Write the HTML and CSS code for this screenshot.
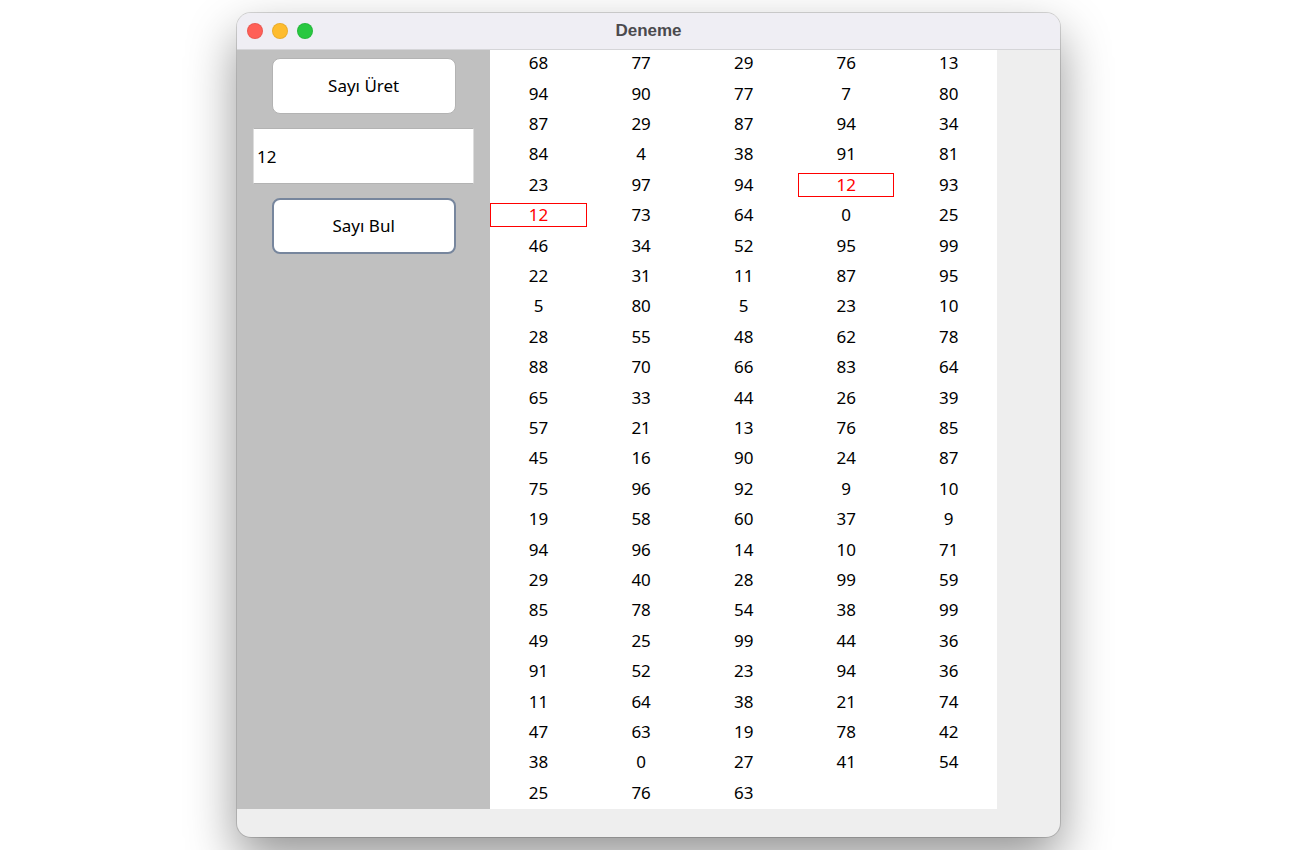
FILE: index.html
```html
<!DOCTYPE html>
<html lang="tr">
<head>
<meta charset="utf-8">
<title>Deneme</title>
<link rel="stylesheet" href="styles.css">
</head>
<body>
<main class="window">
  <header class="titlebar">
    <div class="lights">
      <button class="light close" type="button" aria-label="Kapat"></button>
      <button class="light minimize" type="button" aria-label="Küçült"></button>
      <button class="light maximize" type="button" aria-label="Büyüt"></button>
    </div>
    <h1 class="title">Deneme</h1>
  </header>
  <div class="content">
    <aside class="sidebar">
      <button class="button" type="button">Sayı Üret</button>
      <input class="field" type="text" value="12" aria-label="Aranan sayı">
      <button class="button focused" type="button">Sayı Bul</button>
    </aside>
    <table class="numbers">
      <tbody class="rows">
        <tr><td>68</td><td>77</td><td>29</td><td>76</td><td>13</td></tr>
        <tr><td>94</td><td>90</td><td>77</td><td>7</td><td>80</td></tr>
        <tr><td>87</td><td>29</td><td>87</td><td>94</td><td>34</td></tr>
        <tr><td>84</td><td>4</td><td>38</td><td>91</td><td>81</td></tr>
        <tr><td>23</td><td>97</td><td>94</td><td class="found">12</td><td>93</td></tr>
        <tr><td class="found">12</td><td>73</td><td>64</td><td>0</td><td>25</td></tr>
        <tr><td>46</td><td>34</td><td>52</td><td>95</td><td>99</td></tr>
        <tr><td>22</td><td>31</td><td>11</td><td>87</td><td>95</td></tr>
        <tr><td>5</td><td>80</td><td>5</td><td>23</td><td>10</td></tr>
        <tr><td>28</td><td>55</td><td>48</td><td>62</td><td>78</td></tr>
        <tr><td>88</td><td>70</td><td>66</td><td>83</td><td>64</td></tr>
        <tr><td>65</td><td>33</td><td>44</td><td>26</td><td>39</td></tr>
        <tr><td>57</td><td>21</td><td>13</td><td>76</td><td>85</td></tr>
        <tr><td>45</td><td>16</td><td>90</td><td>24</td><td>87</td></tr>
        <tr><td>75</td><td>96</td><td>92</td><td>9</td><td>10</td></tr>
        <tr><td>19</td><td>58</td><td>60</td><td>37</td><td>9</td></tr>
        <tr><td>94</td><td>96</td><td>14</td><td>10</td><td>71</td></tr>
        <tr><td>29</td><td>40</td><td>28</td><td>99</td><td>59</td></tr>
        <tr><td>85</td><td>78</td><td>54</td><td>38</td><td>99</td></tr>
        <tr><td>49</td><td>25</td><td>99</td><td>44</td><td>36</td></tr>
        <tr><td>91</td><td>52</td><td>23</td><td>94</td><td>36</td></tr>
        <tr><td>11</td><td>64</td><td>38</td><td>21</td><td>74</td></tr>
        <tr><td>47</td><td>63</td><td>19</td><td>78</td><td>42</td></tr>
        <tr><td>38</td><td>0</td><td>27</td><td>41</td><td>54</td></tr>
        <tr><td>25</td><td>76</td><td>63</td></tr>
      </tbody>
    </table>
  </div>
</main>
</body>
</html>
```
FILE: styles.css
```css
* {
  box-sizing: border-box;
}

html {
  overflow: hidden auto;
  scrollbar-width: none;
}

body {
  display: flex;
  justify-content: center;
  min-height: 100vh;
  margin: 0;
  padding: 13px 3px 13px 0;
  background: #fff;
  color: #000;
  font: 17px/22px "Noto Sans", sans-serif;
}

.window {
  display: flex;
  flex-direction: column;
  width: 100%;
  max-width: 823px;
  overflow: hidden;
  border-radius: 14px;
  background: #eee;
  box-shadow: 0 0 0 1px rgba(0, 0, 0, 0.15), 0 22px 50px rgba(0, 0, 0, 0.42);
}

.titlebar {
  display: grid;
  grid-template-columns: 1fr auto 1fr;
  align-items: center;
  height: 37px;
  padding: 0 10px;
  border-bottom: 1px solid #d5d5d8;
  background: #efeef4;
}

.lights {
  display: flex;
  gap: 9px;
}

.light {
  width: 16px;
  height: 16px;
  padding: 0;
  border: 1px solid rgba(0, 0, 0, 0.08);
  border-radius: 50%;
}

.close {
  background: #ff5f57;
}

.minimize {
  background: #febc2e;
}

.maximize {
  background: #28c840;
}

.title {
  margin: 0;
  color: #4b4a4e;
  font: bold 17px/22px "Liberation Sans", sans-serif;
}

.content {
  display: grid;
  flex: 1;
  grid-template-columns: 1fr 2fr;
  padding: 0 63px 28px 0;
}

.sidebar {
  display: flex;
  flex-direction: column;
  align-items: center;
  gap: 14px;
  padding: 8px 16px;
  background: #c0c0c0;
}

.button,
.field {
  height: 56px;
  background: #fff;
  color: inherit;
  font: inherit;
}

.button {
  width: 184px;
  max-width: 100%;
  border: 1px solid #b3b3b3;
  border-radius: 8px;
}

.focused {
  border: 2px solid #77869d;
}

.field {
  width: 100%;
  padding: 0 3px;
  border: 1px solid #b3b3b3;
  border-color: #b3b3b3 #ddd;
  outline: none;
}

.numbers {
  display: grid;
  background: #fff;
}

.rows {
  display: grid;
  grid-template-columns: repeat(5, 1fr);
  grid-auto-rows: 1fr;
  gap: 6px;
  padding: 1px 0 4px;
}

.rows tr {
  display: contents;
}

.rows td {
  display: flex;
  align-items: center;
  justify-content: center;
  padding: 0;
  border: 1px solid transparent;
}

.rows .found {
  border-color: #f00;
  color: #f00;
}
```
